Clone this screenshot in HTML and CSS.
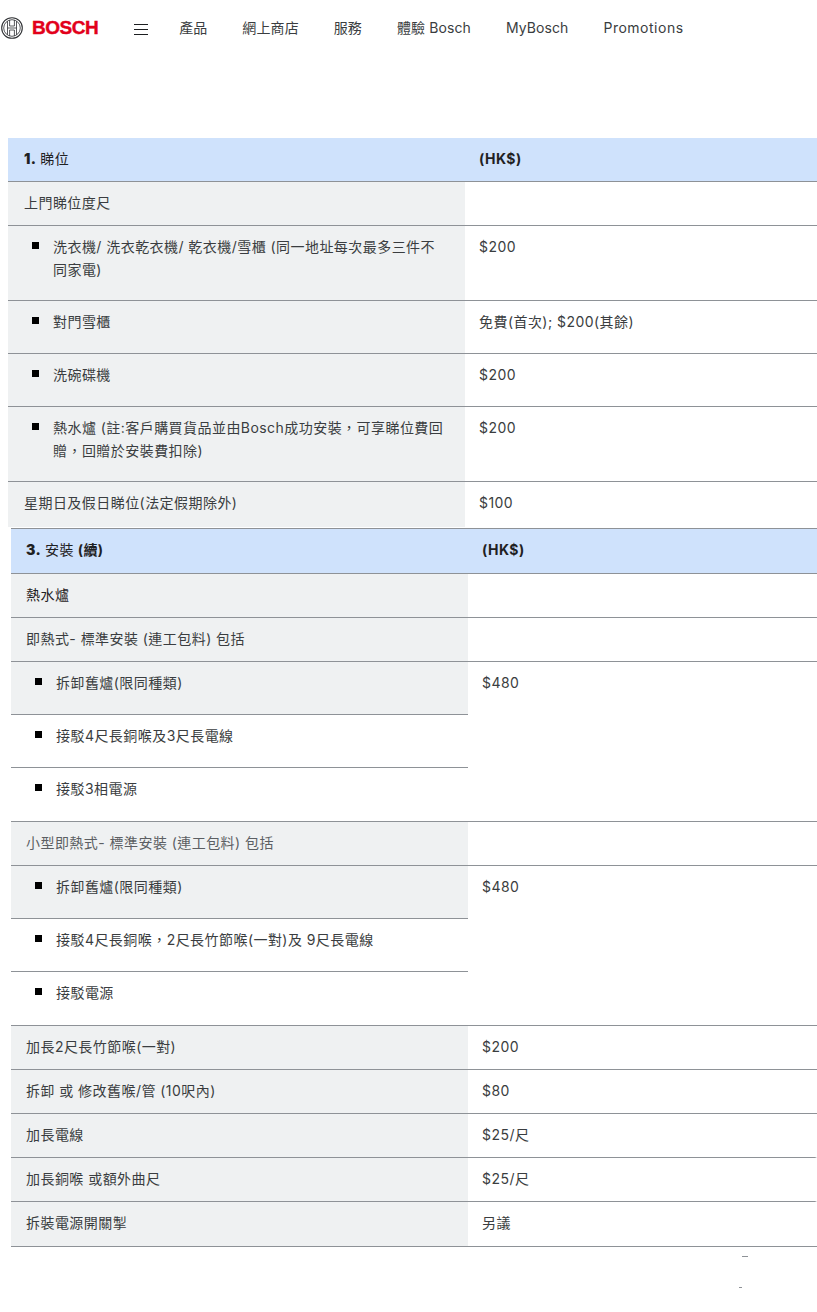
FILE: index.html
```html
<!DOCTYPE html>
<html lang="zh-Hant">
<head>
<meta charset="utf-8">
<title>Bosch</title>
<link rel="stylesheet" href="styles.css">
</head>
<body>
<header class="topbar">
  <div class="brand">
    <svg class="brand-mark" width="22" height="22" viewBox="0 0 22 22" aria-hidden="true">
      <circle cx="11" cy="11" r="10.3" fill="none" stroke="#2e3033" stroke-width="1.1"/>
      <circle cx="11" cy="11" r="8.3" fill="none" stroke="#2e3033" stroke-width="0.8"/>
      <path d="M6.5 4.2V17.8M15.5 4.2V17.8M6.5 11H15.5M8.6 3V9H13.4V3M8.6 19V13H13.4V19" fill="none" stroke="#2e3033" stroke-width="0.8"/>
    </svg>
    <span class="brand-name">BOSCH</span>
  </div>
  <div class="burger"><span></span><span></span><span></span></div>
  <nav class="nav">
    <a>產品</a><a>網上商店</a><a>服務</a><a>體驗 Bosch</a><a>MyBosch</a><a class="wide">Promotions</a>
  </nav>
</header>

<main class="content">
  <table class="fees first">
    <colgroup><col class="c1"><col></colgroup>
    <tr class="head"><th><b>1.</b> <span class="plain">睇位</span></th><th>(HK$)</th></tr>
    <tr><td class="g">上門睇位度尺</td><td></td></tr>
    <tr><td class="g"><div class="item two">洗衣機/ 洗衣乾衣機/ 乾衣機/雪櫃 (同一地址每次最多三件不同家電)</div></td><td>$200</td></tr>
    <tr><td class="g"><div class="item">對門雪櫃</div></td><td>免費(首次); $200(其餘)</td></tr>
    <tr><td class="g"><div class="item">洗碗碟機</div></td><td>$200</td></tr>
    <tr><td class="g"><div class="item two">熱水爐 (註:客戶購買貨品並由Bosch成功安裝，可享睇位費回贈，回贈於安裝費扣除)</div></td><td>$200</td></tr>
    <tr class="last"><td class="g">星期日及假日睇位(法定假期除外)</td><td>$100</td></tr>
  </table>

  <table class="fees second">
    <colgroup><col class="c1"><col></colgroup>
    <tr class="head"><th><b>3.</b> <span class="plain">安裝</span> (續)</th><th>(HK$)</th></tr>
    <tr><td class="g strong">熱水爐</td><td></td></tr>
    <tr><td class="g">即熱式- 標準安裝 (連工包料) 包括</td><td></td></tr>
    <tr><td class="g"><div class="item">拆卸舊爐(限同種類)</div></td><td rowspan="3">$480</td></tr>
    <tr><td><div class="item">接駁4尺長銅喉及3尺長電線</div></td></tr>
    <tr><td><div class="item end">接駁3相電源</div></td></tr>
    <tr><td class="g soft">小型即熱式- 標準安裝 (連工包料) 包括</td><td></td></tr>
    <tr><td class="g"><div class="item">拆卸舊爐(限同種類)</div></td><td rowspan="3">$480</td></tr>
    <tr><td><div class="item">接駁4尺長銅喉，2尺長竹節喉(一對)及 9尺長電線</div></td></tr>
    <tr><td><div class="item end">接駁電源</div></td></tr>
    <tr><td class="g">加長2尺長竹節喉(一對)</td><td>$200</td></tr>
    <tr><td class="g">拆卸 或 修改舊喉/管 (10呎內)</td><td>$80</td></tr>
    <tr><td class="g">加長電線</td><td class="short">$25/尺</td></tr>
    <tr><td class="g">加長銅喉 或額外曲尺</td><td class="short">$25/尺</td></tr>
    <tr class="final"><td class="g">拆裝電源開關掣</td><td>另議</td></tr>
  </table>
</main>
<i class="speck speck-a"></i>
<i class="speck speck-b"></i>
</body>
</html>
```
FILE: styles.css
```css
html, body {
  margin: 0;
  padding: 0;
  background: #fff;
}
body {
  position: relative;
  height: 1312px;
  overflow: hidden;
  font-family: Inter, "Noto Sans CJK TC", "Liberation Sans", sans-serif;
  font-size: 14px;
  color: #3a3d40;
}
.topbar {
  display: flex;
  align-items: center;
  height: 56px;
  padding-left: 1px;
}
.brand {
  display: flex;
  align-items: center;
  gap: 9px;
}
.brand-mark {
  display: block;
}
.brand-name {
  font-family: "Liberation Sans", sans-serif;
  font-weight: 700;
  font-size: 19px;
  line-height: 22px;
  letter-spacing: -0.5px;
  color: #e2001a;
  -webkit-text-stroke: 0.4px #e2001a;
}
.burger {
  display: flex;
  flex-direction: column;
  gap: 4px;
  width: 14px;
  margin-left: 36px;
  padding-top: 2px;
}
.burger span {
  display: block;
  height: 1px;
  background: #1c1e20;
}
.nav {
  display: flex;
  gap: 35px;
  margin-left: 31px;
  line-height: 20px;
  letter-spacing: 0.1px;
}
.nav .wide {
  letter-spacing: 0.5px;
}
.content {
  padding: 82px 0 0 8px;
}
.fees {
  table-layout: fixed;
  border-collapse: separate;
  border-spacing: 0;
  line-height: 23px;
  letter-spacing: 0.45px;
}
.first {
  width: 809px;
}
.second {
  width: 806px;
  margin: 1px 0 0 3px;
  border-top: 1px solid #8e9297;
}
.c1 {
  width: 457px;
}
.fees th,
.fees td {
  text-align: left;
  vertical-align: top;
  border-bottom: 1px solid #8e9297;
}
.fees td {
  padding: 9px 14px 11px;
}
.fees th {
  padding: 9px 14px 11px;
  font-weight: 700;
  background: #cfe2fc;
  color: #1f2123;
}
.fees th:first-child,
.fees td:first-child {
  padding-left: 15px;
  padding-right: 16px;
}
.first th:first-child,
.first td:first-child {
  padding-left: 16px;
}
.second th {
  padding-bottom: 12px;
}
.plain {
  font-weight: 400;
}
.fees td.g {
  background: #eff1f2;
}
.fees td.strong {
  color: #1f2123;
}
.fees td.soft {
  color: #5c5f63;
}
.fees td.short {
  border-right: 2px solid #fff;
}
.first .last td {
  border-bottom: 0;
  padding-bottom: 13px;
}
.final td {
  padding-bottom: 12px;
}
.item {
  display: flex;
  gap: 14px;
  margin-bottom: 9px;
  padding-left: 9px;
}
.first .item {
  padding-left: 8px;
}
.item.two {
  margin-bottom: 8px;
}
.item.end {
  margin-bottom: 10px;
}
.item::before {
  content: "";
  flex: none;
  width: 7px;
  height: 7px;
  margin-top: 7px;
  background: #000;
}
.speck {
  position: absolute;
  height: 1px;
  background: #8e9297;
}
.speck-a {
  left: 742px;
  top: 1256px;
  width: 6px;
}
.speck-b {
  left: 739px;
  top: 1287px;
  width: 3px;
}
```
